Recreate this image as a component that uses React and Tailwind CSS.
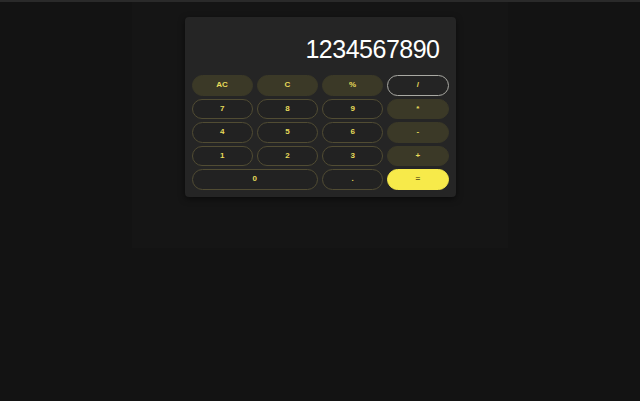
import React from 'react';

const keys = [
  { label: 'AC', kind: 'fn' },
  { label: 'C', kind: 'fn' },
  { label: '%', kind: 'fn' },
  { label: '/', kind: 'active' },
  { label: '7', kind: 'num' },
  { label: '8', kind: 'num' },
  { label: '9', kind: 'num' },
  { label: '*', kind: 'op' },
  { label: '4', kind: 'num' },
  { label: '5', kind: 'num' },
  { label: '6', kind: 'num' },
  { label: '-', kind: 'op' },
  { label: '1', kind: 'num' },
  { label: '2', kind: 'num' },
  { label: '3', kind: 'num' },
  { label: '+', kind: 'op' },
  { label: '0', kind: 'num', wide: true },
  { label: '.', kind: 'num' },
  { label: '=', kind: 'eq' },
];

const styles = {
  fn: 'bg-[#3b3927] border-[#3b3927] text-[#e8dc5a]',
  op: 'bg-[#3b3927] border-[#3b3927] text-[#e8dc5a]',
  active: 'bg-[#242424] border-[#a9a9a3] text-[#e8dc5a]',
  num: 'bg-[#222222] border-[#514c33] text-[#e8dc5a]',
  eq: 'bg-[#f7ea4a] border-[#f7ea4a] text-[#6b6320]',
};

export default function App() {
  return (
    <div className="min-h-[401px] bg-[#131313] border-t-2 border-[#2a2a2a] font-['Liberation_Sans',Arial,sans-serif]">
      <div className="mx-auto w-[376px] min-h-[246px] bg-[#151515] flex justify-center pt-[15px]">
        <div className="w-[271px] h-[180px] bg-[#252525] rounded-[4px] shadow-[0_2px_6px_rgba(0,0,0,0.5)] px-[7px] pb-[8px] flex flex-col">
          <div className="h-[58px] shrink-0 flex items-end justify-end pr-[9px] pb-[13px]">
            <span className="text-white text-[25px] leading-none tracking-[-0.5px]">1234567890</span>
          </div>
          <div className="grid grid-cols-4 gap-x-[4px] gap-y-[3px]">
            {keys.map((k) => (
              <button
                key={k.label}
                className={`${k.wide ? 'col-span-2' : ''} h-[20.5px] rounded-full border text-[8px] font-bold leading-none flex items-center justify-center ${styles[k.kind]}`}
              >
                {k.label}
              </button>
            ))}
          </div>
        </div>
      </div>
    </div>
  );
}
